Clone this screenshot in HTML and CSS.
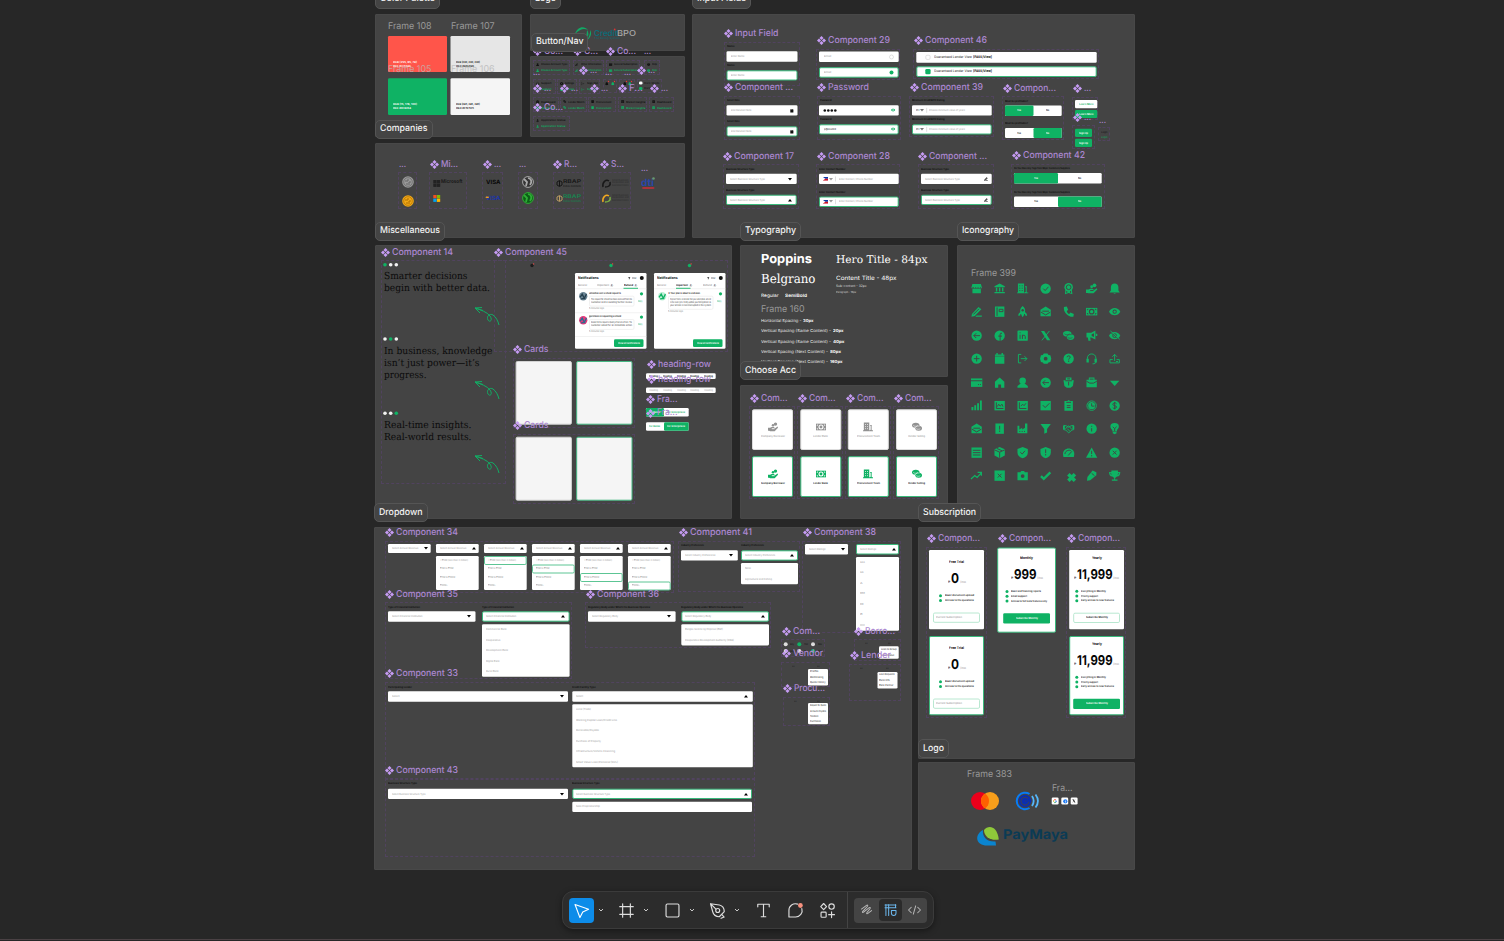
FILE: index.html
```html
<!DOCTYPE html>
<html lang="en">
<head>
<meta charset="utf-8">
<title>Design system</title>
<link rel="stylesheet" href="styles.css">
</head>
<body>
<main class="canvas" id="canvas"></main>
<div class="dock">
  <nav class="toolbar">
    <div class="tools">
      <button class="tool active"><svg viewBox="0 0 24 24"><path d="M5.800 6.200l13 4.600-5.600 2.600-2.700 5.400z"/></svg></button>
      <svg class="chev" viewBox="0 0 8 8"><path d="M2 3l2 2 2-2"/></svg>
      <button class="tool frame"><svg viewBox="0 0 24 24"><path d="M8.300 5.500v13M15.700 5.500v13M5.500 8.300h13M5.500 15.700h13"/></svg></button>
      <svg class="chev" viewBox="0 0 8 8"><path d="M2 3l2 2 2-2"/></svg>
      <button class="tool shape"><svg viewBox="0 0 24 24"><rect x="5.800" y="5.800" width="12.400" height="12.400" rx="1.300"/></svg></button>
      <svg class="chev" viewBox="0 0 8 8"><path d="M2 3l2 2 2-2"/></svg>
      <button class="tool pen"><svg viewBox="0 0 24 24"><path d="M5.300 5.500l8.500 1.200c2.600.6 4.600 3 4.700 6.300l-4.800 5c-3.400-.1-5.600-2-6.300-4.800zM5.500 5.700l5 5M16 15.800l2.400 2.500-3 1.200"/><circle cx="12.200" cy="12" r="1.900"/></svg></button>
      <svg class="chev" viewBox="0 0 8 8"><path d="M2 3l2 2 2-2"/></svg>
      <button class="tool type"><svg viewBox="0 0 24 24"><path d="M6.500 8.500v-2.500h11v2.500M12 6v12M9.800 18h4.400"/></svg></button>
      <button class="tool note"><svg viewBox="0 0 24 24"><path d="M14 5.900A6.300 6.300 0 0 0 5.700 12v6.200H12a6.200 6.200 0 0 0 6.100-8"/><circle class="ping" cx="16.700" cy="7.200" r="2.300"/></svg></button>
      <button class="tool acts"><svg viewBox="0 0 24 24"><path d="M8.300 5.300l2.800 2.900-2.800 2.900-2.800-2.900zM15.900 13.200v5.600M13.100 16h5.600"/><circle cx="15.900" cy="8.200" r="2.600"/><rect x="5.800" y="13.600" width="4.900" height="4.900" rx=".8"/></svg></button>
    </div>
    <div class="modes">
      <div class="seg">
        <button class="mode"><svg viewBox="0 0 24 24"><path d="M6.500 11l5.500-4c1.300-.8 1.800.2.900 1.200l-5 5.200c-.9 1 0 1.700 1 .9l6-4.800c1.100-.8 1.700.2.900 1.200l-3.300 4c-.8 1 0 1.800 1 1l4-3"/></svg></button>
        <button class="mode on"><svg viewBox="0 0 24 24"><path d="M6 6.500h12M6 9.500h12M7 6v12M10 6v12M17.500 6v3.500M13 12.500h5v2.800c0 1.500-1 2.700-2.500 2.700S13 16.800 13 15.300z"/></svg></button>
        <button class="mode"><svg viewBox="0 0 24 24"><path d="M8.500 9L5.500 12l3 3M15.500 9l3 3-3 3M13.300 7.500l-2.600 9"/></svg></button>
      </div>
    </div>
  </nav>
</div>
<div class="edge"></div>
<script src="app.js"></script>
</body>
</html>
```
FILE: styles.css
```css
* { box-sizing: border-box; }
body { margin: 0; width: 100vw; height: 100vh; overflow: hidden; position: relative; background: #272727; font-family: Inter, "Liberation Sans", sans-serif; text-rendering: geometricPrecision; }
.canvas { position: absolute; inset: 0; overflow: hidden; }
.canvas > * { position: absolute; overflow: visible; }
.section { background: #444; border: 1px solid #484848; border-radius: 1px; }
.chip { background: #444; border: 1px solid #555; border-radius: 5px; }
.bound { border: 1px dashed #51435f; }
.text { white-space: pre; line-height: 1; transform-origin: 0 50%; }
.serif { font-family: "DejaVu Serif", serif; }
.b { font-weight: 600; }
.bb { font-weight: 700; }
.m { font-weight: 500; }
.purple { color: #ab87d1; }
.glyph { --hole: #444; overflow: visible; }
.on-white { --hole: #fff; }
.glyph path, .glyph circle, .glyph rect, .glyph ellipse { fill: currentColor; }
.glyph .s { fill: none; stroke: currentColor; stroke-width: 2; }
.glyph .h { fill: var(--hole); }
.glyph .o { fill: none; stroke: var(--hole); stroke-width: 2; }

.dock { position: absolute; left: 0; right: 0; bottom: 12px; display: flex; justify-content: center; padding-right: 8px; }
.toolbar { display: flex; height: 38px; width: 372px; background: #2c2c2c; border: 1px solid #3b3b3b; border-radius: 11px; box-shadow: 0 2px 6px rgba(0,0,0,.4); }
.tools { display: flex; align-items: center; width: 285px; padding-left: 6px; border-right: 1px solid #444; }
.tool, .mode { border: 0; padding: 0; background: none; width: 25px; height: 25px; border-radius: 4px; color: #dedede; flex: none; }
.tool svg, .mode svg { display: block; width: 100%; height: 100%; fill: none; stroke: currentColor; stroke-width: 1.1; stroke-linejoin: round; stroke-linecap: round; }
.tool.active { background: #0d8ce9; color: #fff; }
.chev { width: 8px; height: 8px; margin-left: 3px; fill: none; stroke: #c8c8c8; stroke-width: 1; flex: none; }
.frame { margin-left: 9px; }
.shape { margin-left: 10px; }
.pen { margin-left: 9px; }
.type { margin-left: 10px; }
.note, .acts { margin-left: 7px; }
.tool .ping { fill: #f7917f; stroke: none; }
.modes { display: flex; align-items: center; padding-left: 6px; }
.seg { display: flex; align-items: center; justify-content: space-between; width: 73px; height: 25px; padding: 0 1px; border-radius: 4px; background: #444; }
.mode { width: 23px; height: 22px; color: #b8b8b8; }
.mode.on { background: #2b2b2b; color: #6cb8ee; }
.edge { position: absolute; left: 0; right: 0; bottom: 1px; height: 1px; background: #4a4144; }
```
FILE: app.js
```js
const root = document.getElementById('canvas');
const G = '#0fb264', K = '#111', W = '#fff', MUTE = '#999';

function el(cls, x, y, w, h, css) {
  const n = document.createElement('div');
  n.className = cls;
  Object.assign(n.style, { left: x + 'px', top: y + 'px', width: w + 'px', height: h + 'px' }, css || {});
  root.appendChild(n);
  return n;
}
/* Text starting at x, vertically centred on cy, condensed or widened to w. */
function text(x, cy, w, str, size, color, cls) {
  const n = document.createElement('div');
  n.className = 'text ' + (cls || '');
  n.textContent = str;
  Object.assign(n.style, { left: x + 'px', top: cy - size / 2 + 'px', fontSize: size + 'px' });
  if (color) n.style.color = color;
  root.appendChild(n);
  if (w) n.style.transform = 'scaleX(' + w / n.getBoundingClientRect().width + ')';
  return n;
}
/* Vector shape on a whole-pixel origin, so fractional edges stay antialiased. */
function shape(x, y, w, h, draw) {
  const l = Math.floor(x), t = Math.floor(y);
  root.insertAdjacentHTML('beforeend', `<svg width="${Math.ceil(w) + 1}" height="${Math.ceil(h) + 1}" style="left:${l}px;top:${t}px">${draw(x - l, y - t)}</svg>`);
}
function rect(x, y, x2, y2, fill, border) {
  const i = border ? .5 : 0;
  shape(x, y, x2 - x, y2 - y, (a, b) => `<rect x="${a + i}" y="${b + i}" width="${x2 - x - 2 * i}" height="${y2 - y - 2 * i}" rx="1.300" fill="${fill}" ${border ? `stroke="${border}"` : ''}/>`);
}
const line = (x, y, w, h, fill) => shape(x, y, w, h, (a, b) => `<rect x="${a}" y="${b}" width="${w}" height="${h}" fill="${fill}"/>`);
const dot = (cx, cy, r, fill, ring) => shape(cx - r, cy - r, 2 * r, 2 * r, (a, b) => `<circle cx="${a + r}" cy="${b + r}" r="${r}" fill="${fill}" ${ring ? `stroke="${ring}" stroke-width=".6"` : ''}/>`);
const bound = (x, y, x2, y2) => el('bound', x, y, x2 - x, y2 - y);
const section = (x, y, x2, y2) => el('section', x, y, x2 - x, y2 - y);
function svg(x, y, w, h, box, body, color, cls) {
  root.insertAdjacentHTML('beforeend', `<svg class="${cls || ''}" viewBox="${box}" width="${w}" height="${h}" style="left:${x}px;top:${y}px;color:${color || ''}">${body}</svg>`);
}
function chip(x, y, x2, str) {
  el('chip', x, y, x2 - x, 19);
  text(x + 5, y + 9.500, x2 - x - 10, str, 9.300, '#f2f2f2', 'm');
}
const mark = (cx, cy) => svg(cx - 4.500, cy - 4.500, 9, 9, '0 0 18 18', '<path fill="currentColor" d="M9 0l4 4-4 4-4-4zM9 10l4 4-4 4-4-4zM4 5l4 4-4 4-4-4zM14 5l4 4-4 4-4-4z"/>', '#c69cf4');
function comp(cx, cy, str, w) { mark(cx, cy); text(cx + 6.800, cy - .1, w, str, 9.400, '', 'purple m'); }
const dots = (x, cy) => text(x, cy, 7, '...', 9, '', 'purple m');
const frame = (x, cy, str, w, c) => text(x, cy - .2, w, str, 9.400, c || '#999');
const tiny = (x, cy, x2, str, c, cls) => text(x, cy, x2 - x, str, 2.700, c || MUTE, cls);
const head = (x, cy, x2, str) => tiny(x, cy, x2, str, '#0c0c0c', 'b');
const caret = (cx, cy, up, c) => svg(cx - 2, cy - 1.300, 4, 2.600, '0 0 4 2.6', up ? '<path fill="currentColor" d="M0 2.600h4L2 0z"/>' : '<path fill="currentColor" d="M0 0h4L2 2.600z"/>', c || '#000');
function field(x, y, x2, y2, str, tx, tx2, green, arrow) {
  rect(x, y, x2, y2, W, green ? '#39b97c' : '');
  const cy = (y + y2) / 2;
  if (str) tiny(tx, cy, tx2, str);
  if (arrow) caret(x2 - (x2 - x > 50 ? 6.500 : 5), cy, arrow === 'up');
}
const list = (x, y, x2, y2, rows) => {
  rect(x, y, x2, y2, W);
  rows.forEach(([cy, s, w]) => tiny(x + 3.800, cy, x + 3.800 + w, s));
};

/* ---------- glyphs, 24 unit box ---------- */
const I = {
  store: '<path d="M3 2h18l2 7v2H1V9zM3 12h18v10H3z"/><path class="o" d="M3 10h3m3 0h2m3 0h2m3 0h2"/>',
  bank: '<path d="M12 1l11 6v2H1V7zM4 10h3v8H4zM10.500 10h3v8h-3zM17 10h3v8h-3zM1 19h22v3H1z"/>',
  building: '<path d="M2 1h13v21H2zM17 7h4v13h2v2h-6zM0 20h24v2H0z"/><path class="o" d="M5 6h2m3 0h2M5 11h2m3 0h2M5 16h2m3 0h2M18.500 9v10"/>',
  check: '<circle cx="12" cy="12" r="11"/><path class="o" d="M7 12l4 4 7-8"/>',
  award: '<circle cx="12" cy="9" r="9"/><path d="M5 15l-1 9 8-3 8 3-1-9z"/><circle class="o" cx="12" cy="9" r="5"/><path class="o" d="M8 17v4m8-4v4"/>',
  hand: '<circle cx="18" cy="5" r="4"/><circle cx="12" cy="8" r="3"/><path d="M0 14h5l4-2h5l3 3 6-4 1 3-8 8H5l-2-1H0z"/><path class="o" d="M9 16h7"/>',
  bell: '<path d="M12 1c5 0 8 3 8 8v7l3 4H1l3-4V9c0-5 3-8 8-8zM9 21h6l-3 2z"/>',
  pencil: '<path d="M2 17L16 2l6 5L8 21l-7 2zM12 20h11v3H9z"/><path class="o" d="M5 18L17 6"/>',
  book: '<path d="M2 1h20v22H2z"/><path class="o" d="M6.500 3v18M11 7h8v5h-8z"/>',
  rocket: '<path d="M12 0c5 4 6 9 5 13l4 4v4l-6-2-3 5-3-5-6 2v-4l4-4C6 9 7 4 12 0z"/><circle class="h" cx="12" cy="9" r="2.500"/><path class="o" d="M8 17v4m8-4v4"/>',
  mail: '<path d="M12 1l11 7v14H1V8z"/><path class="o" d="M5 11h14M2 13l10 6 10-6"/>',
  phone: '<path d="M2 2l6-1 3 7-3 3c1 3 3 5 5 6l3-3 7 3-1 6C11 24 0 13 2 2z"/>',
  cash: '<path d="M0 4h24v16H0z"/><ellipse class="h" cx="12" cy="12" rx="6" ry="6"/><circle cx="12" cy="12" r="3.500"/><path class="o" d="M3 9V7h2M19 7h2v2M3 15v2h2m14 0h2v-2"/>',
  eye: '<path d="M0 12c5-10 19-10 24 0-5 10-19 10-24 0z"/><circle class="h" cx="12" cy="12" r="4.500"/><circle cx="12" cy="12" r="2.500"/>',
  left: '<circle cx="12" cy="12" r="11"/><path class="o" d="M19 12H6m5-5l-5 5 5 5"/>',
  fb: '<circle cx="12" cy="12" r="11"/><path class="o" d="M17 7h-2c-2 0-2 1-2 3v13M9 13h8" stroke-width="3"/>',
  li: '<rect x="1" y="1" width="22" height="22" rx="2"/><path class="o" d="M6.500 10v9M6.500 5v2M11.500 19v-9m0 4c0-4 6-4 6 0v5"/>',
  x: '<path d="M2 2h7l13 20h-7z"/><path class="s" d="M20 2L4 22" stroke-width="2.500"/>',
  coins: '<ellipse cx="9" cy="8" rx="9" ry="6"/><ellipse cx="16" cy="15" rx="8" ry="6"/><path class="o" d="M3 8c3 3 8 3 11 0M10 16c3 2 7 2 10 0M8 14c1-4 6-5 10-4" style="stroke-width:1.300"/>',
  horn: '<path d="M1 6h10l9-5v19l-9-4H9l1 7H5l-1-7H1zM21 8h3v5h-3z"/><path class="h" d="M12 9v4l5 2V7z"/>',
  eyeoff: '<path d="M0 12c5-10 19-10 24 0-5 10-19 10-24 0z"/><circle class="o" cx="12" cy="12" r="4"/><path class="o" d="M1 3l22 18"/><path class="s" d="M3 2l20 18"/>',
  plus: '<circle cx="12" cy="12" r="11"/><path class="o" d="M12 6v12M6 12h12"/>',
  cal: '<path d="M2 3h20v20H2zM5 0h3v4H5zM16 0h3v4h-3z"/><path class="o" d="M2 7h20" style="stroke-width:1"/>',
  exit: '<path class="s" d="M9 3H3v18h6M8 12h13m-5-5l5 5-5 5"/>',
  gear: '<path d="M8 1h8l2 3 4 1 2 7-2 7-4 1-2 3H8l-2-3-4-1-2-7 2-7 4-1z"/><circle class="h" cx="12" cy="12" r="4"/>',
  help: '<circle cx="12" cy="12" r="11"/><path class="o" d="M8.500 9c0-4 7-4 7 0 0 2-3.500 2-3.500 5m0 2v3"/>',
  headset: '<path class="s" d="M3 15v-4c0-12 18-12 18 0v8c0 3-3 4-7 4"/><path d="M1 12h5v8H1zM18 12h5v8h-5z"/>',
  upload: '<path class="s" d="M8 14H2v7h20v-7h-6M12 17V3M7 8l5-5 5 5"/><path d="M15 17h4v2h-4z"/>',
  card: '<path d="M0 3h24v18H0z"/><path class="o" d="M0 8h24M15 16h2m2 0h2"/>',
  home: '<path d="M12 1l10 9v13h-7v-7H9v7H2V10z"/>',
  user: '<circle cx="12" cy="8" r="7"/><path d="M9 13h6l8 6v4H1v-4z"/>',
  pouch: '<path d="M6 1h12v6h5l-2 12-5 4H8l-5-4L1 7h5z"/><path class="o" d="M5 8h14M12 10v8M9 4h6"/>',
  brief: '<path d="M6 1h12v5h5v16H1V6h5z"/><path class="o" d="M8 4.500h8M1 9l7 4h8l7-4"/>',
  down: '<path d="M2 8h20L12 19z"/>',
  bars: '<path d="M1 15h4v7H1zM7 11h4v11H7zM13 7h4v15h-4zM19 1h4v21h-4z"/>',
  chart: '<path d="M1 2h22v20H1z"/><path class="o" d="M5 5v13h15M7 14l3-5 3 4 4-4 2 5"/>',
  trend: '<path d="M1 2h22v20H1z"/><path class="o" d="M5 5v13h15M8 13l4-4 3 3 4-5"/>',
  box: '<path d="M1 2h22v20H1z"/><path class="o" d="M6 11l5 5 9-9"/>',
  clip: '<path d="M3 2h6l3-2 3 2h6v21H3z"/><path class="o" d="M7 5h10M8 12h8M8 16h8"/>',
  clock: '<circle class="s" cx="12" cy="12" r="10"/><circle cx="12" cy="12" r="7.500"/><path class="o" d="M12 7v6h6"/>',
  dollar: '<circle cx="12" cy="12" r="11"/><path class="o" d="M16 8c-1-3-8-2-8 1 0 4 8 2 8 6 0 3-7 4-8 1M12 4v16"/>',
  alert: '<path d="M3 1h18v22H3z"/><path class="o" d="M12 6v8m0 2v3"/>',
  factory: '<path d="M1 6h4v8l6-4v4l6-4V1h5v21H1z"/><path class="o" d="M5 18h2m3 0h2m3 0h2"/>',
  funnel: '<path d="M1 2h22l-8 11v7l-6 3V13z"/>',
  shake: '<path class="s" d="M1 5l6 1 5 3 5-3 6-1M1 14l5 1 6 6 7-6 4-1M5 12l7-6 7 8M9 12l6 6"/><path d="M0 6h4v8H0zM20 6h4v8h-4z"/>',
  info: '<circle cx="12" cy="12" r="11"/><path class="o" d="M12 6v2m0 3v7"/>',
  bulb: '<path d="M12 0c11 0 11 10 5 15v3H7v-3C1 10 1 0 12 0zM8 19h8v3l-4 2-4-2z"/><path class="o" d="M8 8l4 4 4-4m-4 4v5"/>',
  lines: '<path d="M1 1h22v22H1z"/><path class="o" d="M4 7h16M4 12h16M4 17h16"/>',
  pack: '<path d="M12 0l11 5v13l-11 6-11-6V5z"/><path class="o" d="M1 6l11 5 11-5M12 11v12M6 3l11 5"/>',
  shield: '<path d="M12 0l11 4v8c0 6-5 10-11 12C6 22 1 18 1 12V4z"/><path class="o" d="M7 11l4 4 6-7"/>',
  shieldx: '<path d="M12 0l11 4v8c0 6-5 10-11 12C6 22 1 18 1 12V4z"/><path class="o" d="M12 5v8m0 2v3"/>',
  gauge: '<path d="M1 21C-3 7 6 3 12 3s15 4 11 18z"/><path class="o" d="M4 15c1-9 11-9 13-7M11 18l8-9"/>',
  warn: '<path d="M12 1l12 22H0z"/><path class="o" d="M12 8v7m0 2v3"/>',
  cross: '<circle cx="12" cy="12" r="11"/><path class="o" d="M8 8l8 8m0-8l-8 8"/>',
  rise: '<path class="s" d="M0 19l8-7 5 4L22 6M14 5h8v7" style="stroke-width:2.600"/>',
  xbox: '<path d="M1 1h22v22H1z"/><path class="o" d="M8 8l8 8m0-8l-8 8"/>',
  camera: '<path d="M1 5h6l2-3h6l2 3h6v17H1z"/><circle class="h" cx="12" cy="13" r="4"/>',
  tick: '<path class="s" d="M2 13l6 6L22 5" style="stroke-width:5"/>',
  mult: '<path class="s" d="M5 9l14 14M19 9L5 23" style="stroke-width:7.500"/>',
  eraser: '<path d="M14 1l8 4v6L9 22l-7 1 1-8z"/><path class="o" d="M12 7l6 5"/>',
  cup: '<path d="M5 1h14v3h5c0 6-2 9-7 10l-4 3v3h5v3H6v-3h5v-3l-4-3C2 13 0 10 0 4h5z"/><path class="o" d="M3 6l2 4m16-4l-2 4" style="stroke-width:1.300"/>'
};
const glyph = (name, cx, cy, size, color, cls) =>
  svg(cx - size / 2, cy - size / 2, size, size, '0 0 24 24', I[name], color, 'glyph ' + (cls || ''));

/* ---------- Color palette ---------- */
section(375, 14, 522, 137);
rect(388, 36, 447, 72, '#ff554a'); rect(450.500, 36, 510, 72, '#e6e6e6');
rect(388, 78.300, 447, 115, G); rect(450.500, 78.300, 510, 115, '#f5f5f5');
[[392.500, 62, W, '(255, 85, 74)', '#FF554A'], [455.500, 62, K, '(230, 230, 230)', '#E6E6E6'],
 [392.500, 104.500, W, '(15, 178, 100)', '#0FB264'], [455.500, 104.500, K, '(245, 245, 245)', '#F5F5F5']]
  .forEach(([x, y, c, a, b]) => { tiny(x, y, x + 24, 'RGB ' + a, c, 'b'); tiny(x, y + 4, x + 18, 'HEX ' + b, c, 'b'); });
frame(388, 26.600, 'Frame 108', 43.500); frame(451, 26.600, 'Frame 107', 43.500);
frame(388, 69.700, 'Frame 105', 43.500, '#cf9d9a'); frame(451, 69.700, 'Frame 106', 43.500, '#c2c2c2');
chip(375, -10.500, 440, 'Color Palette');

/* ---------- Logo ---------- */
section(530, 14, 685, 51);
svg(575, 26, 18, 16, '0 0 18 16', '<path fill="#12a865" d="M0 8C2 1 9-1 13 4 9 2 5 3 0 8zM12 4c3 4 1 9-4 11 3-4 4-7 4-11zM15.500 4c1.500 4 0 8-3.500 10 2-3 3-6 3.500-10z"/>');
text(593.500, 33, 23.500, 'Credit', 8.200, '#0d6b77', 'b'); text(617, 33, 19, 'BPO', 8.200, '#a8a8a8', 'm');
tiny(594, 38.500, 620, 'The Rating System', '#0d6b77');
dot(614.700, 29.500, .9, '#d33');

/* ---------- Button/Nav ---------- */
section(530, 56, 685, 137);
comp(537.500, 51.300, 'Co...', 19); comp(577, 51.300, 'C...', 14); comp(610.500, 51.300, 'Co...', 19); dots(644, 51.300);
const navItem = (x, x2, y, str, end, ic) => {
  bound(x, y, x2, y + 15);
  glyph(ic, x + 4.200, y + 4.700, 3.200, K); glyph(ic, x + 4.200, y + 10.700, 3.200, G);
  tiny(x + 8, y + 4.700, end, str, K, 'b'); tiny(x + 8, y + 10.700, end, str, G, 'b');
};
[['user', 533, 570, 'Choose Account Type', 567.500], ['pencil', 572.500, 604, 'Other Information', 601], ['card', 606, 640, 'General Subscription', 637.500], ['help', 644, 660, 'Help', 657]]
  .forEach(([i, a, b, s, e]) => navItem(a, b, 60, s, e, i));
[['headset', 533, 556, 'Support', 551.500], ['gear', 557, 577, 'Settings', 574], ['exit', 578.500, 600, 'Sign Out', 597.500]]
  .forEach(([i, a, b, s, e]) => navItem(a, b, 78.500, s, e, i));
bound(602.500, 78.500, 617, 93); bound(619, 78.500, 635, 93); bound(637, 78.500, 661.500, 93);
[606.500, 612.500, 624.500, 629.500].forEach((x, i) => { glyph('bell', x, 83.500, 3.500, i % 2 ? G : K); dot(x + 2, 81.500, .7, '#e33'); });
rect(639, 81.500, 642.500, 84.500, W); rect(639, 87, 642.500, 90, G); tiny(643.500, 83.200, 659, 'Dark Mode', K); tiny(643.500, 88.700, 659, 'Dark Mode', K);
[['mail', 533, 558.500, 'Dashboard', 555.500], ['coins', 560, 586.500, 'Lender Match', 584.500], ['store', 588, 615.500, 'Procurement', 611.500], ['chart', 618, 647, 'Market Insights', 645.500], ['clip', 649, 674, 'Dashboard', 671.500]]
  .forEach(([i, a, b, s, e]) => navItem(a, b, 97.200, s, e, i));
navItem(533, 570, 116, 'Application Status', 565.500, 'rocket');
[[533, 72], [605, 72], [623.500, 72]].forEach(p => dots(...p));
[[583.300, 70.300], [641.500, 70.300], [537.500, 88.500], [564.500, 88.500], [594.500, 88.500], [654.500, 88.500]].forEach(p => comp(...p, '...', 7));
comp(622.500, 88.500, 'F...', 14); comp(537.500, 107.500, 'Co...', 19);
chip(530.500, 32.500, 588, 'Button/Nav'); chip(530, -10.500, 561, 'Logo');

/* ---------- Companies ---------- */
section(375, 143, 685, 238);
dots(399, 164.500); comp(434.500, 164.300, 'Mi...', 17); comp(487.500, 164.300, '...', 7); dots(519, 164.500); comp(557.500, 164.300, 'R...', 13); comp(604.500, 164.300, 'S...', 13); dots(641, 168);
[[398, 417], [429, 467], [482, 503], [518, 538], [553, 584], [599, 631]].forEach(([a, b]) => bound(a, 172, b, 209));
[['#9a9a9a', '#666', 182], ['#f0a818', '#b06f00', 200.500]].forEach(([c, d, y]) => svg(401.500, y - 6, 12, 12, '0 0 12 12', `<circle cx="6" cy="6" r="5.800" fill="${c}"/><circle cx="6" cy="6" r="4.300" fill="none" stroke="${d}" stroke-width=".7"/><path d="M3 5h3V3m1 6V6h2M4 8h2" stroke="${d}" fill="none"/>`));
[[180, ['#222', '#222', '#222', '#222']], [195, ['#f25022', '#7fba00', '#00a4ef', '#ffb900']]].forEach(([y, c]) => c.forEach((f, i) => line(433.300 + (i % 2) * 3.600, y + (i > 1 ? 3.600 : 0), 3.300, 3.300, f)));
text(441, 183, 21.500, 'Microsoft', 5.200, '#151515', 'b');
text(486, 183.200, 14.500, 'VISA', 5.800, '#090909', 'bb'); text(486, 198.500, 14.500, 'VISA', 5.800, '#1d35a8', 'bb'); rect(485.500, 196.500, 489, 198, '#f0a018');
[['#aaa', '#333', 182], ['#2fae35', '#0c5f17', 198]].forEach(([c, d, y]) => svg(522, y - 6, 12, 12, '0 0 12 12', `<circle cx="6" cy="6" r="5.400" fill="${d}" stroke="${c}"/><path d="M2 3l3 3-1 4M6 2c4 1 4 4 2 7" stroke="${c}" stroke-width="1.800" fill="none"/>`));
[['#151515', '#151515', 183], ['#b99a62', '#158750', 198]].forEach(([a, b, y]) => { svg(555.500, y - 3.500, 7, 7, '0 0 7 7', `<path d="M3.500.5L6 2v3L3.500 6.500 1 5V2zM3.500 1v5" fill="none" stroke="${a}"/>`); text(563, y - .2, 18, 'RBAP', 5.300, b, 'b'); tiny(563, y + 3, 581, 'RURAL BANKERS', b); });
[['#181818', '#181818', 183], ['#f1aa20', '#7cb342', 198]].forEach(([a, b, y]) => { svg(602, y - 4.500, 9, 9, '0 0 9 9', `<path d="M1 8C0 3 4 0 7 2" fill="none" stroke="${a}" stroke-width="1.500"/><path d="M8 3c1 4-2 5-5 5" fill="none" stroke="${b}" stroke-width="1.500"/>`); ['Small Business', 'Corporation and', 'Guarantee Finance'].forEach((s, i) => tiny(611.500, y - 2.800 + i * 2.600, 628, s, '#2b2b2b')); });
text(641, 182.700, 13, 'dti', 10, '#2847a8', 'bb'); rect(642, 187.300, 654.500, 188.800, '#cc2c39'); dot(653.500, 178.500, 1.300, '#689970');
chip(375, 119.500, 432.500, 'Companies');

/* ---------- Input fields ---------- */
section(692, 14, 1135, 238);
bound(724, 42, 800, 86);
[[46.700, 51.300, 61.700, 0], [65.700, 70.300, 80.500, 1]].forEach(([l, a, b, g]) => { head(726.500, l, 734, 'Name'); field(726.500, a, 797.500, b, 'Enter Name', 730.500, 744, g); });
bound(816, 49, 900, 80);
field(819, 51.500, 898.700, 62, 'Email', 823.700, 831, 0); field(819, 67.200, 898.700, 77.700, 'Email', 823.700, 831, 1);
dot(891.500, 57, 2, W, '#ccc'); dot(891.500, 72.500, 2, G);
bound(913, 49, 1099, 79);
[[52, 62.700, 0], [66.300, 77, 1]].forEach(([a, b, g]) => { field(916.300, a, 1096.700, b, '', 0, 0, g); rect(925.300, (a + b) / 2 - 2.600, 930.600, (a + b) / 2 + 2.600, g ? G : W, g ? '' : '#e2e2e2'); text(934, (a + b) / 2, 38, 'Guaranteed Lender View', 3.500, '#222'); text(973, (a + b) / 2, 19, '[PASS/View]', 3.500, K, 'bb'); });
bound(724, 96, 800, 140);
[[100.600, 105.300, 115.500, 0], [121.700, 126.300, 136.500, 1]].forEach(([l, a, b, g]) => { head(726.500, l, 739, 'Select Date'); field(726.500, a, 797.500, b, 'Enter Document Name', 730.500, 751, g); glyph('cal', 791.700, (a + b) / 2, 3.700, K); });
bound(817, 96, 901, 140);
[[100.600, 105.300, 115.500, 0], [119.600, 124.300, 134.500, 1]].forEach(([l, a, b, g]) => { head(819.500, l, 831, 'Password'); field(819, a, 898.700, b, '', 0, 0, g); if (g) tiny(823.500, 129.400, 835.500, 'p@ssw0rd', K); else [825, 828.500, 832, 835.500].forEach(x => dot(x - .2, 110.500, 1.300, K)); glyph('eye', 893, (a + b) / 2, 4.200, G, 'on-white'); });
bound(909, 96, 994, 137);
[[100.600, 105.300, 115.500, 0], [119.600, 124.300, 134.500, 1]].forEach(([l, a, b, g]) => { head(912, l, 944.500, 'Minimum CreditBPO Rating'); field(912, a, 991.700, b, 'Choose minimum value of years', 929, 965, g); tiny(916, (a + b) / 2, 919.500, 'PH', K); caret(922, (a + b) / 2, 0, '#777'); line(926.500, a + 2.500, .6, 5, '#ccc'); });
function pair(x, m, x2, y, y2, first, a, b) {
  rect(x, y, x2, y2, W); rect(first ? m : x, y, first ? x2 : m, y2, G);
  tiny((x + m) / 2 - 2, (y + y2) / 2, (x + m) / 2 + 2, a, first ? K : W, 'b'); tiny((m + x2) / 2 - 1.500, (y + y2) / 2, (m + x2) / 2 + 1.700, b, first ? W : K, 'b');
}
bound(1002, 96, 1064, 140);
head(1005, 101, 1028, 'Must be profitable?'); pair(1005, 1033.500, 1061.700, 105.500, 116, 0, 'Yes', 'No');
head(1005, 123.500, 1028, 'Must be profitable?'); pair(1005, 1033.500, 1061.700, 128, 138, 1, 'Yes', 'No');
bound(1072, 97, 1098, 120); rect(1075, 100, 1097.300, 108.300, W); rect(1075, 110, 1097.300, 118, G);
tiny(1079, 104.200, 1093.500, 'Learn More', G, 'b'); tiny(1079, 114, 1093.500, 'Learn More', W, 'b');
bound(1072, 125, 1095, 149); [128.700, 138.700].forEach(y => { rect(1075, y, 1092, y + 8.300, G); tiny(1079, y + 4.200, 1088, 'Sign Up', W, 'b'); });
bound(1098, 127, 1110, 141); tiny(1101, 132, 1107.500, 'Login', K); tiny(1101, 137, 1107.500, 'Login', G);
bound(723, 164, 799, 209);
[[169, 173.700, 184, 0], [190.300, 194.700, 205, 1]].forEach(([l, a, b, g]) => { head(726, l, 754.500, 'Business Structure Type'); field(726, a, 796.700, b, 'Select Business Structure Type', 729.500, 764.500, g, g ? 'up' : 'down'); head(921, l, 949, 'Business Structure Type'); field(921, a, 991.700, b, 'Select Business Structure Type', 924.500, 959.500, g); glyph('pencil', 986, (a + b) / 2, 4, K, 'on-white'); });
bound(816, 164, 900, 209); bound(918, 164, 994, 209);
[[169, 173.700, 184, 0], [192, 196.500, 207, 1]].forEach(([l, a, b, g]) => { head(819, l, 845.500, 'Enter Contact Number'); field(819, a, 898.700, b, 'Enter Contact / Phone Number', 839, 873, g); const c = (a + b) / 2; svg(823.300, c - 1.800, 5, 3.600, '0 0 5 3.6', '<path fill="#0a38a8" d="M0 0h5v1.800H0z"/><path fill="#ce1126" d="M0 1.800h5v1.800H0z"/><path fill="#fff" d="M0 0l2.300 1.800L0 3.600z"/>'); caret(830.700, c, 0, '#999'); line(835.300, a + 2.700, .6, 5, '#ccc'); });
bound(1011, 164, 1105, 209);
head(1014, 168.700, 1070, 'Do You Have Any Tags from Major Customers/Suppliers'); pair(1014, 1058, 1101.700, 173, 183.500, 0, 'Yes', 'No');
head(1014, 192, 1070, 'Do You Have Any Tags from Major Customers/Suppliers'); pair(1014, 1058, 1101.700, 196.500, 207, 1, 'Yes', 'No');
[[728.300, 33.500, 'Input Field', 43.500], [821.500, 40.400, 'Component 29', 62], [918.500, 40.400, 'Component 46', 62], [728.300, 87.500, 'Component ...', 58], [821.500, 87.500, 'Password', 41], [914.500, 87.500, 'Component 39', 62], [1007.500, 88.500, 'Compon...', 42], [1077.500, 88.500, '...', 7], [1077.500, 117.300, '...', 7], [727.500, 156.400, 'Component 17', 60], [821.500, 156.400, 'Component 28', 62], [922.300, 156.400, 'Component ...', 58], [1016.500, 155.500, 'Component 42', 62]].forEach(a => comp(...a));
dots(1099, 120); chip(692, -10.500, 751, 'Input Fields');

/* ---------- Miscellaneous ---------- */
section(375, 245, 732, 519);
comp(385.500, 252.500, 'Component 14', 61); comp(498.500, 252.500, 'Component 45', 62);
bound(381, 260, 506, 484); bound(494, 260, 728, 352);
[0, 1, 2].forEach(r => {
  const y = 264.700 + r * 74.300;
  [385, 390.700, 396.300].forEach((x, i) => dot(x, y, 1.800, i === r ? G : '#f2f2f2'));
  svg(474, y + 41, 27, 22, '0 0 27 22', '<path fill="none" stroke="#12ac64" stroke-width="1" d="M8 1.500L1 2l5 5M1 2c6 2 12 4 15 8 3 4 0 7-2 4-2-4 2-7 5-5 3 2 5 6 6 10M1 2l8 2.500"/>');
});
[[277.500, 83.500, 'Smarter decisions'], [289.500, 106, 'begin with better data.'], [352, 108.500, 'In business, knowledge'], [364, 95.500, 'isn’t just power—it’s'], [376, 42.500, 'progress.'], [426, 87.500, 'Real-time insights.'], [438, 87.500, 'Real-world results.']]
  .forEach(([y, w, s]) => text(383.500, y - .5, w, s, 9.700, '#0b0b0b', 'serif'));
[[532, '#1c1c1c'], [611, G], [689.500, G]].forEach(([x, c]) => { dot(x, 265.500, 1.700, c); dot(x + 1.600, 263.900, .7, '#e44'); });
function panel(x, items, tab) {
  rect(x, 273, x + 71.500, 348.800, W);
  text(x + 3, 278, 20.500, 'Notifications', 3.700, K, 'bb'); glyph('funnel', x + 54, 278, 2.500, K); tiny(x + 57, 278, x + 61.500, 'Filter', K); dot(x + 66.800, 278, 2, K);
  [['General', 3, 9], ['Important', 22, 12], ['Refund', 49, 9]].forEach(([s, o, w], i) => { tiny(x + o, 285.500, x + o + w, s, tab === i ? K : '#777', tab === i ? 'bb' : ''); if (i) { dot(x + o + w + 2.800, 285.500, 1.500, '#ddd'); tiny(x + o + w + 2.200, 285.500, x + o + w + 3.400, '2', K); } });
  line(x, 288.700, 71.500, .4, '#ddd'); line(x + (tab === 2 ? 48.500 : 22), 287.800, 14.500, .9, G);
  items.forEach(([y, c, d, s, lines]) => {
    svg(x + 3.500, y - 4, 8.500, 8.500, '0 0 8 8', `<circle cx="4" cy="4" r="3.900" fill="${c}"/><path d="M1 5l2-3 2 4 2-4M2 6.500l4-.5" fill="none" stroke="${d}" stroke-width="1.200"/>`);
    tiny(x + 14, y - 3, x + 46, s, K, 'b'); rect(x + 14, y - .5, x + 59.500, y + 4 + lines.length * 3.200, '#fff', '#f1f1f1');
    lines.forEach((t, i) => tiny(x + 16, y + 2.800 + i * 3, x + 57, t, '#333')); dot(x + 66.500, y - 2.400, 1.600, G); tiny(x + 63, y + 5, x + 67.500, 'Reply', G); tiny(x + 14, y + 6.300 + lines.length * 3, x + 29, '5 minutes ago', '#888');
    if (items.length > 1) line(x, y + 16.500, 71.500, .4, '#ddd');
  });
  rect(x + 39, 339.300, x + 68.500, 347, G); tiny(x + 43, 343.200, x + 65, 'View all notifications', W, 'b');
}
panel(575, [[296.200, '#6d8796', '#27414f', 'Johnathan sent a refund request to', ['The request for refund has been received from the', 'customer and is awaiting further review']], [319.500, '#e8397c', '#2b6d91', 'garrickson is requesting a refund', ['Reason for the request is Quality of Service of Item. The', 'customer asked for an immediate action']]], 2);
panel(654, [[296.200, '#bdf0d7', G, '★ Your plan is about to end soon', ['Payment Terms: A reminder that your subscription will end', 'in the next cycle. Kindly update your billing details so', 'your access is not interrupted in the system']]], 1);
[[361, 424.700], [436.700, 500.700]].forEach(([a, b]) => { bound(513, a - 3, 635, b + 3); rect(515.600, a, 571.900, b, '#f5f5f5', '#d3d3d3'); rect(576.200, a, 632.500, b, '#f5f5f5', '#45b783'); });
comp(517.500, 349.500, 'Cards', 24.500); comp(517.500, 425.500, 'Cards', 24.500);
[[373.300, 379, K], [387.500, 393, MUTE]].forEach(([a, b, c]) => { rect(646, a, 715.700, b, W); [648.500, 662.500, 676.500, 690, 704].forEach(x => tiny(x, (a + b) / 2, x + 9, 'Heading', c, c === K ? 'b' : '')); });
function seg(y, first) {
  rect(646, y, 688.700, y + 8.500, W); if (first) rect(646, y, 664, y + 8.500, G); else rect(664, y, 688.700, y + 8.500, G);
  tiny(649, y + 4.200, 660, 'For Banks', first ? W : G, 'b'); tiny(667, y + 4.200, 685, 'For Enterprises', first ? G : W, 'b');
}
seg(408, 1); seg(422.200, 0);
comp(651.500, 364.500, 'heading-row', 53); comp(651.500, 379.500, 'heading-row', 53); comp(650.500, 399.300, 'Fra...', 20.500); comp(650.500, 413, 'Fra...', 20.500);
chip(375, 221.500, 445, 'Miscellaneous');

/* ---------- Typography ---------- */
section(740, 245, 948, 377);
text(760.500, 260.500, 51, 'Poppins', 12.500, W, 'bb'); text(760.500, 279.700, 54.500, 'Belgrano', 12.500, W, 'serif');
text(836.300, 260.300, 91.500, 'Hero Title - 84px', 10.500, W, 'serif'); text(836.300, 278.500, 60.500, 'Content Title - 48px', 5.900, W);
text(836.300, 286.700, 30.500, 'Sub-content - 32px', 3.300, '#ddd'); text(836.300, 292.300, 20, 'Paragraph - 16px', 2.700, '#ddd');
text(760.800, 297.500, 17.500, 'Regular', 4.400, W); text(785, 297.500, 22, 'SemiBold', 4.400, W, 'b');
frame(761, 309.600, 'Frame 160', 43.500);
[['Horizontal Spacing -', 40.500, '30px', 10.500], ['Vertical Spacing (Same Content) -', 70, '20px', 10.500], ['Vertical Spacing (Same Content) -', 70, '40px', 11.500], ['Vertical Spacing (Next Content) -', 67, '80px', 11], ['Vertical Spacing (Next Content) -', 67, '160px', 12.500]]
  .forEach(([a, w, b, w2], i) => { text(760.800, 321.300 + i * 10.100, w, a, 4, '#eee'); text(762.800 + w, 321.300 + i * 10.100, w2, b, 4, W, 'bb'); });
chip(740, 221.500, 801, 'Typography');

/* ---------- Choose account ---------- */
section(740, 385, 948, 519);
[[752, 'hand', 'Company Borrower', 24], [800.300, 'cash', 'Lender Bank', 15], [847.800, 'building', 'Procurement Team', 23], [896, 'coins', 'Vendor Selling', 17]].forEach(([x, ic, s, w], i) => {
  bound(x - 3, 406, x + 43, 499); comp(x + 2.300, 398.500, 'Com...', 26.500);
  rect(x, 409.300, x + 41, 450, W, '#ddd'); rect(x, 456.200, x + 41, 497, W, '#39b97c');
  const c = x + 20.500;
  glyph(ic, c, 426.500, 10, '#929292', 'on-white'); tiny(c - w / 2, 436.300, c + w / 2, s, '#888');
  glyph(ic, c, 473.700, 10, G, 'on-white'); tiny(c - w / 2, 483.300, c + w / 2, s, K, 'b');
});
chip(740, 361, 801, 'Choose Acc');

/* ---------- Iconography ---------- */
section(957, 245, 1135, 519);
frame(971, 273.500, 'Frame 399', 45);
['store bank building check award hand bell', 'pencil book rocket mail phone cash eye', 'left fb li x coins horn eyeoff', 'plus cal exit gear help headset upload', 'card home user left pouch brief down', 'bars chart trend box clip clock dollar', 'mail alert factory funnel shake info bulb', 'lines pack shield shieldx gauge warn cross', 'rise xbox camera tick mult eraser cup']
  .forEach((r, j) => r.split(' ').forEach((n, i) => glyph(n, 976.900 + i * 23.030 + (n === 'mult' ? 2.500 : 0), 288.700 + j * 23.370, 11.300, G)));
chip(957, 221.500, 1019, 'Iconography');

/* ---------- Dropdown ---------- */
section(374, 527, 912, 870);
bound(385, 541, 674, 593);
const rev = ['< ₱3M (less than 3 million)', '₱3M to ₱15M', '₱15M to ₱100M', '₱100M+'], revW = [28, 13.500, 15, 7.500];
[388, 436, 484, 532, 580, 628].forEach((x, i) => {
  field(x, 544, x + 42.700, 553, 'Select Annual Revenue', x + 3.700, x + 30, 0, i ? 'up' : 'down');
  if (i) { list(x, 556, x + 42.700, 590, rev.map((s, k) => [560 + k * 8.600, s, revW[k]])); if (i > 1) rect(x, 556 + (i - 2) * 8.500, x + 42.700, 565 + (i - 2) * 8.500, 'none', '#5cc594'); }
});
bound(385, 602, 572, 679);
head(388, 607, 420, 'Type of Financial Institution'); head(482, 607, 514, 'Type of Financial Institution');
field(388, 611.300, 475.500, 621.700, 'Select Financial Institution', 391.500, 422, 0, 'down'); field(482, 611.300, 569.600, 621.700, 'Select Financial Institution', 485.700, 516, 1, 'up');
list(482, 624.300, 569.600, 676.700, [[629.700, 'Commercial Bank', 20.500], [640.200, 'Cooperative', 14.500], [650.700, 'Development Bank', 22], [661.200, 'Digital Bank', 13.500], [671.700, 'Rural Bank', 12.500]]);
bound(585, 602, 771, 648);
const reg = 'Regulatory Body under Which the Business Operates';
head(588, 607, 650, reg); head(681, 607, 743, reg);
field(588, 611.300, 675.600, 621.700, 'Select Regulatory Body', 592, 618, 0, 'down'); field(681.300, 611.300, 769, 621.700, 'Select Regulatory Body', 685.300, 711.500, 1, 'up');
list(681.300, 624.300, 769, 645.400, [[629.700, 'Bangko Sentral ng Pilipinas (BSP)', 38], [640.200, 'Cooperative Development Authority (CDA)', 49]]);
bound(678, 541, 800, 592);
head(681, 545.500, 704, 'Industry Preference'); head(741, 545.500, 764, 'Industry Preference');
field(681, 550.300, 737.800, 560.600, 'Select Industry Preferences', 684.500, 715, 0, 'down'); field(741, 550.300, 798, 560.600, 'Select Industry Preference', 744.800, 775, 1, 'up');
list(741, 563, 798, 584.200, [[568.300, 'None', 6], [579, 'Agricultural and Fishing', 27]]);
bound(802, 541, 901, 633);
field(805, 544, 848, 554.500, 'Select Ratings', 809, 825.500, 0, 'down'); field(856, 544, 899, 554.500, 'Select Ratings', 859.700, 876, 1, 'up');
list(856, 557, 899, 630.800, ['AAA', 'AA', 'A', 'BBB', 'BB', 'B', 'CCC'].map((s, i) => [562.300 + i * 10.500, s, 1.500 + s.length * 1.100]));
bound(385, 682, 755, 780); bound(385, 778, 755, 857);
head(388, 687, 412, 'Participating Lender'); head(572.300, 687, 596, 'Credit Facility Type');
field(388, 691.300, 568, 701.700, 'Select', 391.500, 399, 0, 'down'); field(572.300, 691.300, 752.800, 701.700, 'Select', 576, 583, 0, 'up');
list(572.300, 704.300, 752.800, 767.300, [[709.500, 'Local (Trade)', 15], [720, 'Working Capital Loan/Credit Line', 41], [730.500, 'Receivable/Payable', 23], [741, 'Purchase of Property', 25], [751.500, 'Infrastructure/Vehicle Financing', 39], [762, 'Small Value Loan/Personal (SVL)', 42]]);
head(388, 783.300, 417, 'Business Structure Type'); head(572.300, 783.300, 600, 'Business Structure Type');
field(388, 788.700, 568, 799, 'Select Business Structure Type', 391.500, 425, 0, 'down'); field(572.300, 788.700, 752, 799, 'Select Business Structure Type', 576, 610, 1, 'up');
list(572.300, 801.700, 752, 812, [[806.800, 'Sole Proprietorship', 24]]);
[['Component 34', 389.500, 532.500], ['Component 35', 389.500, 594.500], ['Component 36', 590.500, 594.500], ['Component 33', 389.500, 673.500], ['Component 43', 389.500, 770.500], ['Component 41', 683.500, 532.500], ['Component 38', 807.500, 532.500]].forEach(([s, x, y]) => comp(x, y, s, 62));
bound(781, 639, 825, 657);
[644.300, 651].forEach((y, r) => [785.700, 799.300, 813].forEach((x, i) => { dot(x, y, 2, (r ? i === 2 : i === 1) ? G : '#ddd'); tiny(x + 4.500, y, x + 8.500, ['Any', 'Yes', 'Now'][i], K); }));
function menu(bx, by, bx2, by2, x, y, x2, y2, rows) {
  bound(bx, by, bx2, by2); tiny(bx + 10.500, by + 4, bx + 13, '•••', K); tiny(x + 8.500, by + 4, x + 11, '•••', K); rect(x, y, x2, y2, W);
  rows.forEach((s, i) => tiny(x + 1.500, y + (y2 - y) * (i + .5) / rows.length, x + 1.500 + Math.min(16, s.length * 1.200), s, '#222'));
}
menu(781, 662, 830, 687, 808, 669, 828, 685.500, ['Profile', 'Matchmaking', 'Quote History']);
menu(783, 697, 830, 726, 808, 703, 828, 724.300, ['Request for Quote', 'Accounts Payable', 'Tenders', 'Purchases']);
menu(854, 639, 901, 661, 879, 646.300, 898.700, 658.700, ['Loan to Group', 'Loan Status']);
menu(849, 664, 901, 701, 877.500, 672, 897.500, 688.500, ['Loan Requests', 'Bank Info', 'Bank Partner']);
comp(786.300, 631.500, 'Com...', 27); comp(786.300, 653.500, 'Vendor', 30); comp(787.300, 688.500, 'Procu...', 31); comp(858.500, 631.500, 'Borro...', 30); comp(854.500, 655.500, 'Lender', 30);
chip(374.400, 502.700, 428, 'Dropdown');

/* ---------- Subscription ---------- */
section(918, 527, 1135, 759);
bound(926, 547, 987, 718); bound(1066, 547, 1126, 718);
function plan(x, y, x2, y2, o) {
  rect(x, y, x2, y2, W, o.green ? '#39b97c' : '');
  const c = (x + x2) / 2, ty = y + o.title;
  text(c - o.tw / 2, ty, o.tw, o.name, 3.600, K, 'bb');
  text(o.px, ty + 16.800, o.pw, o.price, 13.500, '#050505', 'bb');
  text(o.px - 3.200, ty + 20, 2.200, '₱', 3.500, '#333'); text(o.px + o.pw + .7, ty + 20, 6, '/mo', 3.200, '#999');
  o.items.forEach(([s, w], i) => { const iy = y + o.list + i * 4.750; dot(o.bx, iy, 1.500, G); tiny(o.bx + 4, iy, o.bx + 4 + w, s, '#222', 'b'); });
  const by = y + o.btn; rect(o.b1, by, o.b2, by + 10.300, o.solid ? G : W, o.solid ? '' : '#b9e8d1');
  const w = o.left ? 26 : 22, bx = o.left ? o.b1 + 3 : (o.b1 + o.b2 - w) / 2; tiny(bx, by + 5.100, bx + w, o.cta, o.solid ? W : o.left ? '#888' : K, o.left ? '' : 'b');
}
[550, 636].forEach((y, i) => plan(929, y, 984, y + 79.300, { green: i, title: 13, tw: 15, name: 'Free Trial', px: 951, pw: 8, price: '0', items: [['Basic document upload', 29], ['Access to the questions', 29]], bx: 940.500, list: 45.700, btn: 62.500, b1: 933, b2: 980, left: 1, cta: 'Current Subscription' }));
plan(997.200, 547.500, 1056, 632.700, { green: 1, title: 11.200, tw: 13, name: 'Monthly', px: 1014, pw: 22.500, price: '999', items: [['Basic and financing reports', 30], ['Email support', 16], ['Access to full tools features only', 36]], bx: 1007, list: 43.900, btn: 65.700, b1: 1003.200, b2: 1050, solid: 1, cta: 'Subscribe Monthly' });
[550, 636].forEach((y, i) => plan(1069.200, y, 1124, y + 79.300, { green: i, title: 8.700, tw: 10, name: 'Yearly', px: 1077, pw: 35.500, price: '11,999', items: [['Everything in Monthly', 25], ['Priority support', 17], ['Early access to new features', 33]], bx: 1076.800, list: 41.300, btn: 62.700, b1: 1073.200, b2: 1120, solid: i, cta: 'Subscribe Monthly' }));
[931.500, 1002.500, 1071.500].forEach(x => comp(x, 538.500, 'Compon...', 42));
chip(918, 503, 981, 'Subscription');

/* ---------- Payment logos ---------- */
section(918, 762, 1135, 870);
frame(967, 774.500, 'Frame 383', 45); frame(1052, 788.500, 'Fra...', 20.500);
svg(971, 792, 28, 18, '0 0 28 18', '<circle cx="9" cy="9" r="9" fill="#eb001b"/><circle cx="19" cy="9" r="9" fill="#f79e1b"/><path fill="#ff5f00" d="M14 1.500a9 9 0 0 1 0 15 9 9 0 0 1 0-15z"/>');
svg(1015, 791, 24, 20, '0 0 24 20', '<circle cx="10" cy="10" r="6.200" fill="#0b2eb2"/><path fill="none" stroke="#087cf5" stroke-width="2" d="M14.500 3A8.300 8.300 0 1 0 14.500 17"/><path fill="none" stroke="#55b7fb" stroke-width="1.800" d="M17 5c2 3 2 7 0 10M20.500 3.500c3 4 3 9 0 13"/><path fill="none" stroke="#444" stroke-width="1" d="M13 7.500A4 4 0 1 0 14 10h-4"/><path fill="none" stroke="#0b2eb2" stroke-width="1.600" d="M10.500 10h6"/>');
[1051.700, 1061.300, 1070.700].forEach(x => rect(x, 797.500, x + 6.900, 804.500, W));
svg(1053.200, 799, 4, 4, '0 0 24 24', '<path fill="none" stroke="#ea4335" stroke-width="5" d="M4 9a9 9 0 0 1 15-3"/><path fill="none" stroke="#fbbc05" stroke-width="5" d="M4 8v8"/><path fill="none" stroke="#34a853" stroke-width="5" d="M4 16a9 9 0 0 0 14 3"/><path fill="none" stroke="#4285f4" stroke-width="5" d="M12 12h9c0 4-1 6-3 8"/>');
glyph('fb', 1065.100, 801, 4.600, '#1877f2', 'on-white'); glyph('x', 1074.200, 801, 3.800, '#222', 'on-white');
svg(976, 826, 24, 20, '0 0 24 20', '<path fill="#0a84cf" d="M7 4C-1 8-1 18 9 19.500h11l-.5-4C11 16 6 11 7 4z"/><path fill="#8fc93a" d="M8 4c4-5 13-5 14.800 9.500C15 15 8 11 8 4z"/>');
text(1002.500, 835.500, 65, 'PayMaya', 13.400, '#0b3b55', 'bb');
chip(918, 738.700, 949, 'Logo');
```
